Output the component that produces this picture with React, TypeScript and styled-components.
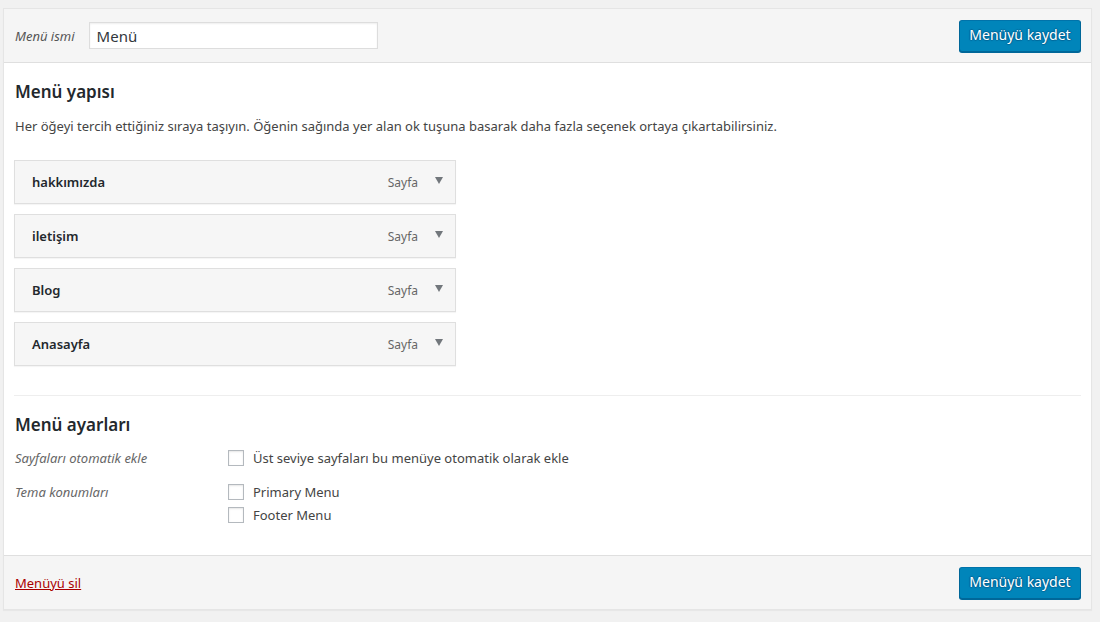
import React from 'react';
import styled, { createGlobalStyle } from 'styled-components';

const GlobalStyle = createGlobalStyle`
  body {
    margin: 0;
    background: #f1f1f1;
    font-family: "Noto Sans", "Open Sans", sans-serif;
    font-size: 13px;
    color: #444;
  }
`;

const Page = styled.div`
  padding: 8px 8px 12px 3px;
`;

const Frame = styled.div`
  border: 1px solid #e5e5e5;
  box-shadow: 0 1px 1px rgba(0, 0, 0, 0.04);
  background: #fff;
`;

const Bar = styled.div<{ $top?: boolean }>`
  display: flex;
  align-items: center;
  justify-content: space-between;
  height: 53px;
  padding: 0 10px 0 11px;
  background: #f5f5f5;
  ${({ $top }) => ($top ? 'border-bottom: 1px solid #dfdfdf;' : 'border-top: 1px solid #dfdfdf;')}
`;

const NameField = styled.label`
  display: flex;
  align-items: center;
  gap: 14px;
  font-style: italic;
  color: #555;
`;

const TextInput = styled.input`
  width: 289px;
  height: 27px;
  box-sizing: border-box;
  padding: 0 7px;
  border: 1px solid #ddd;
  box-shadow: inset 0 1px 2px rgba(0, 0, 0, 0.07);
  font-family: inherit;
  font-size: 15px;
  font-style: normal;
  color: #32373c;
  outline: none;
`;

const PrimaryButton = styled.button`
  width: 122px;
  height: 32px;
  padding: 0 0 2px;
  border: 1px solid #0073aa;
  border-color: #0073aa #006799 #006799;
  border-radius: 3px;
  background: #0085ba;
  box-shadow: 0 1px 0 #006799;
  color: #fff;
  font-family: inherit;
  font-size: 14px;
  text-shadow: 0 -1px 1px #006799, 1px 0 1px #006799, 0 1px 1px #006799, -1px 0 1px #006799;
  cursor: pointer;
`;

const Body = styled.div`
  padding: 0 10px;
`;

const Section = styled.div<{ $divided?: boolean }>`
  padding: ${({ $divided }) => ($divided ? '14px 0 30px' : '14px 0 29px')};
  ${({ $divided }) => ($divided ? 'border-top: 1px solid #eee;' : '')}
`;

const Heading = styled.h3`
  margin: 0 0 9px 1px;
  font-size: 17px;
  font-weight: 600;
  color: #23282d;
  line-height: 30px;
`;

const Hint = styled.p`
  margin: 0 0 24px 1px;
  line-height: 20px;
`;

const ItemList = styled.ul`
  list-style: none;
  margin: 0;
  padding: 0;
  display: flex;
  flex-direction: column;
  gap: 10px;
`;

const Item = styled.li`
  width: 442px;
  height: 44px;
  box-sizing: border-box;
  display: flex;
  align-items: center;
  padding: 0 12px 0 17px;
  border: 1px solid #dfdfdf;
  background: #f6f6f6;
  box-shadow: 0 1px 1px rgba(0, 0, 0, 0.04);
`;

const ItemTitle = styled.span`
  flex: 1;
  font-weight: 600;
  color: #23282d;
`;

const ItemType = styled.span`
  color: #666;
  font-size: 12px;
  margin-right: 17px;
`;

const Arrow = styled.span`
  width: 0;
  height: 0;
  border-left: 4.5px solid transparent;
  border-right: 4.5px solid transparent;
  border-top: 7px solid #72777c;
  margin-bottom: 3px;
`;

const Settings = styled.div`
  display: flex;
  flex-direction: column;
  gap: 14px;
  margin-top: -1px;
`;

const SettingRow = styled.div`
  display: grid;
  grid-template-columns: 213px 1fr;
  margin-left: 1px;
`;

const SettingLabel = styled.div`
  font-style: italic;
  color: #666;
  line-height: 20px;
`;

const Options = styled.div`
  display: flex;
  flex-direction: column;
  gap: 3px;
`;

const Option = styled.label`
  display: flex;
  align-items: center;
  gap: 9px;
  line-height: 20px;
  color: #444;
`;

const Box = styled.span`
  width: 16px;
  height: 16px;
  box-sizing: border-box;
  border: 1px solid #b4b9be;
  background: #fff;
  box-shadow: inset 0 1px 2px rgba(0, 0, 0, 0.1);
`;

const DeleteLink = styled.a`
  color: #a00;
  text-decoration: underline;
  font-size: 13px;
  cursor: pointer;
`;

const items = ['hakkımızda', 'iletişim', 'Blog', 'Anasayfa'];

function App (): React.ReactElement {
  return (
    <Page>
      <GlobalStyle />
      <Frame>
        <Bar $top>
          <NameField>
            Menü ismi
            <TextInput defaultValue="Menü" />
          </NameField>
          <PrimaryButton>Menüyü kaydet</PrimaryButton>
        </Bar>
        <Body>
          <Section>
            <Heading>Menü yapısı</Heading>
            <Hint>
              Her öğeyi tercih ettiğiniz sıraya taşıyın. Öğenin sağında yer alan ok tuşuna basarak daha fazla seçenek ortaya çıkartabilirsiniz.
            </Hint>
            <ItemList>
              {items.map((title) => (
                <Item key={title}>
                  <ItemTitle>{title}</ItemTitle>
                  <ItemType>Sayfa</ItemType>
                  <Arrow />
                </Item>
              ))}
            </ItemList>
          </Section>
          <Section $divided>
            <Heading>Menü ayarları</Heading>
            <Settings>
              <SettingRow>
                <SettingLabel>Sayfaları otomatik ekle</SettingLabel>
                <Options>
                  <Option><Box />Üst seviye sayfaları bu menüye otomatik olarak ekle</Option>
                </Options>
              </SettingRow>
              <SettingRow>
                <SettingLabel>Tema konumları</SettingLabel>
                <Options>
                  <Option><Box />Primary Menu</Option>
                  <Option><Box />Footer Menu</Option>
                </Options>
              </SettingRow>
            </Settings>
          </Section>
        </Body>
        <Bar>
          <DeleteLink>Menüyü sil</DeleteLink>
          <PrimaryButton>Menüyü kaydet</PrimaryButton>
        </Bar>
      </Frame>
    </Page>
  );
}

export default App;
